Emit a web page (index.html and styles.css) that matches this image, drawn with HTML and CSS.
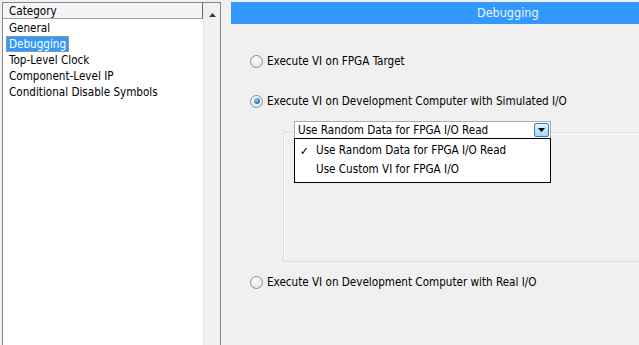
FILE: index.html
```html
<!DOCTYPE html>
<html lang="en">
<head>
    <meta charset="UTF-8">
    <title>Properties - Debugging</title>
    <link rel="stylesheet" href="styles.css">
</head>
<body>
    <!-- Category list on the left -->
    <div class="sidebar">
        <div class="category-list">
            <div class="list-header">Category</div>
            <div class="list-item">General</div>
            <div class="list-item selected">Debugging</div>
            <div class="list-item">Top-Level Clock</div>
            <div class="list-item">Component-Level IP</div>
            <div class="list-item">Conditional Disable Symbols</div>
        </div>
        <div class="scrollbar">
            <svg class="scroll-arrow" width="7" height="4" viewBox="0 0 7 4"><path d="M0 4 L3.5 0 L7 4 Z" fill="#3b3b3b"/></svg>
        </div>
    </div>

    <!-- Page for the selected category -->
    <div class="page">
        <div class="page-title">Debugging</div>

        <div class="options">
            <label class="radio-row first">
                <span class="radio"></span>
                <span>Execute VI on FPGA Target</span>
            </label>

            <label class="radio-row second">
                <span class="radio checked"></span>
                <span>Execute VI on Development Computer with Simulated I/O</span>
            </label>

            <div class="group-box">
                <div class="combo">
                    <span class="combo-text">Use Random Data for FPGA I/O Read</span>
                    <span class="combo-button">
                        <svg width="7" height="4" viewBox="0 0 7 4"><path d="M0 0 L7 0 L3.5 4 Z" fill="#000"/></svg>
                    </span>
                    <!-- open drop-down list -->
                    <div class="combo-list">
                        <div class="combo-option"><span class="check">&#x2713;</span>Use Random Data for FPGA I/O Read</div>
                        <div class="combo-option"><span class="check"></span>Use Custom VI for FPGA I/O</div>
                    </div>
                </div>
            </div>

            <label class="radio-row third">
                <span class="radio"></span>
                <span>Execute VI on Development Computer with Real I/O</span>
            </label>
        </div>
    </div>
</body>
</html>
```

FILE: styles.css
```css
/* Page style */
body {
    margin: 0;
    height: 345px;
    overflow: hidden;
    display: flex;
    background: #f0f0f0;
    font-family: "DejaVu Sans Condensed", "DejaVu Sans", sans-serif;
    font-size: 11.6px;
    color: #000;
}

/* Left category list */
.sidebar {
    margin: 2px 0 0 2px;
    width: 217px;
    border: 1px solid #828790;
    border-bottom: none;
    background: #fff;
    display: flex;
}

.category-list {
    flex: 1;
}

.list-header {
    height: 15px;
    line-height: 16px;
    padding-left: 6px;
    margin-bottom: 1px;
    background: #f4f4f4;
    border-bottom: 1px solid #a0a0a0;
    border-right: 1px solid #6d6d6d;
}

.list-item {
    height: 16px;
    line-height: 17px;
    margin-left: 3px;
    padding: 0 3px;
    width: fit-content;
}

.list-item.selected {
    background: #3399ff;
    color: #fff;
    outline: 1px dotted #e8952f;
    outline-offset: -1px;
}

.scrollbar {
    width: 16px;
    background: #f0f0f0;
    border-left: 1px solid #e6e6e6;
    display: flex;
    justify-content: center;
    align-items: flex-start;
}

.scroll-arrow {
    margin-top: 10px;
}

/* Right page */
.page {
    flex: 1;
    margin-left: 10px;
    overflow: hidden;
}

.page-title {
    margin-top: 2px;
    height: 22px;
    line-height: 22px;
    padding-left: 246px;
    background: #3399ff;
    color: #eef5ff;
    font-size: 12.5px;
}

.options {
    padding-left: 19px;
}

.radio-row {
    display: flex;
    align-items: center;
    gap: 4px;
    height: 16px;
}

.radio-row.first {
    margin-top: 29px;
}

.radio-row.second {
    margin-top: 24px;
}

.radio-row.third {
    margin-top: 12px;
}

.radio {
    width: 11px;
    height: 11px;
    border: 1px solid #8f8f8f;
    border-radius: 50%;
    background: radial-gradient(circle at 40% 35%, #ffffff, #dcdcdc);
    display: flex;
    justify-content: center;
    align-items: center;
}

.radio.checked::after {
    content: "";
    width: 6px;
    height: 6px;
    border-radius: 50%;
    background: radial-gradient(circle at 40% 35%, #8fd8ff, #1a6fb8 70%, #0c3f73);
}

/* Group box under the simulated option */
.group-box {
    margin: 23px 0 0 33px;
    height: 128px;
    border: 1px solid #d5dfe5;
    border-right: none;
    border-radius: 3px 0 0 3px;
    box-shadow: inset 1px 1px 0 #fff;
}

.combo {
    position: relative;
    margin: -12px 0 0 10px;
    width: 255px;
    height: 16px;
    border: 1px solid #acacac;
    background: #fff;
    display: flex;
    align-items: center;
}

.combo-text {
    flex: 1;
    padding-left: 3px;
}

.combo-button {
    width: 15px;
    height: 14px;
    margin-right: 1px;
    border: 1px solid #3c7fb1;
    border-radius: 2px;
    background: linear-gradient(#eaf6fd, #bee6fd 50%, #a7d9f5);
    display: flex;
    justify-content: center;
    align-items: center;
    box-sizing: border-box;
}

.combo-list {
    position: absolute;
    top: 16px;
    left: -1px;
    width: 255px;
    padding: 2px 0 3px;
    border: 1px solid #000;
    background: #fff;
    z-index: 1;
}

.combo-option {
    display: flex;
    height: 19px;
    line-height: 19px;
}

.check {
    width: 21px;
    padding-left: 5px;
    padding-top: 1px;
    box-sizing: border-box;
}
```
